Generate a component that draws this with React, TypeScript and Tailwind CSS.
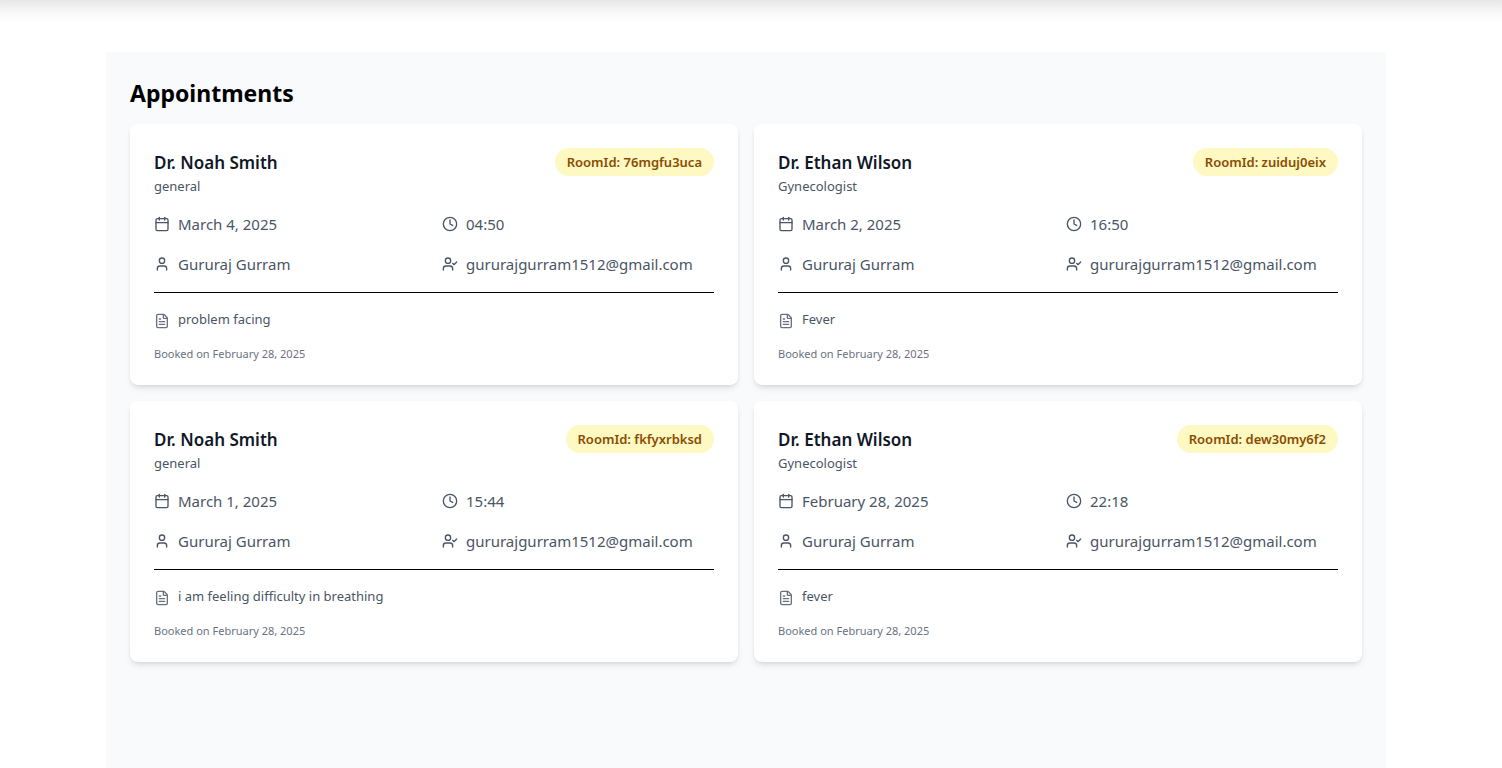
import React from "react";
import { Calendar, Clock, FileText, User, UserCheck } from "lucide-react";

interface Appointment {
  doctor: string;
  specialty: string;
  room: string;
  date: string;
  time: string;
  patient: string;
  email: string;
  problem: string;
  booked: string;
}

const appointments: Appointment[] = [
  { doctor: "Dr. Noah Smith", specialty: "general", room: "76mgfu3uca", date: "March 4, 2025", time: "04:50", patient: "Gururaj Gurram", email: "gururajgurram1512@gmail.com", problem: "problem facing", booked: "February 28, 2025" },
  { doctor: "Dr. Ethan Wilson", specialty: "Gynecologist", room: "zuiduj0eix", date: "March 2, 2025", time: "16:50", patient: "Gururaj Gurram", email: "gururajgurram1512@gmail.com", problem: "Fever", booked: "February 28, 2025" },
  { doctor: "Dr. Noah Smith", specialty: "general", room: "fkfyxrbksd", date: "March 1, 2025", time: "15:44", patient: "Gururaj Gurram", email: "gururajgurram1512@gmail.com", problem: "i am feeling difficulty in breathing", booked: "February 28, 2025" },
  { doctor: "Dr. Ethan Wilson", specialty: "Gynecologist", room: "dew30my6f2", date: "February 28, 2025", time: "22:18", patient: "Gururaj Gurram", email: "gururajgurram1512@gmail.com", problem: "fever", booked: "February 28, 2025" },
];

function AppointmentCard({ item }: { item: Appointment }) {
  return (
    <article className="rounded-lg bg-white px-6 pt-6 pb-[22px] shadow-md">
      <div className="mb-[18px] flex items-start justify-between">
        <div>
          <h3 className="text-[17px] leading-[30px] font-semibold text-gray-900">{item.doctor}</h3>
          <p className="text-[13px] leading-4 text-gray-600">{item.specialty}</p>
        </div>
        <span className="rounded-full bg-yellow-100 px-3 py-1 text-[13px] leading-5 font-semibold text-yellow-800">
          RoomId: {item.room}
        </span>
      </div>
      <div className="mb-4 grid grid-cols-2 gap-4 text-[15px] leading-6 text-gray-600">
        <div className="flex items-center gap-2"><Calendar size={16} /><span>{item.date}</span></div>
        <div className="flex items-center gap-2"><Clock size={16} /><span>{item.time}</span></div>
        <div className="flex items-center gap-2"><User size={16} /><span>{item.patient}</span></div>
        <div className="flex items-center gap-2"><UserCheck size={16} /><span>{item.email}</span></div>
      </div>
      <div className="border-t border-black pt-4">
        <div className="flex items-start gap-2 text-gray-600">
          <FileText size={16} className="mt-1 text-gray-500" />
          <p className="text-[13px] leading-5">{item.problem}</p>
        </div>
      </div>
      <p className="mt-4 text-[11px] leading-[18px] text-gray-500">Booked on {item.booked}</p>
    </article>
  );
}

export default function App() {
  return (
    <div className="flow-root overflow-x-clip bg-white font-['Noto_Sans',sans-serif]">
      <header className="-mx-5 -mt-16 h-16 bg-white shadow-[0_4px_20px_rgba(0,0,0,0.15)]" />
      <div className="pt-[52px] pr-[10px]">
        <main className="mx-auto min-h-[calc(100vh-52px)] max-w-7xl bg-gray-50 p-6">
          <h2 className="mb-[14px] text-[23px] leading-[34px] font-bold text-black">Appointments</h2>
          <div className="grid grid-cols-2 gap-4">
            {appointments.map((item) => (
              <AppointmentCard key={item.room} item={item} />
            ))}
          </div>
        </main>
      </div>
    </div>
  );
}
